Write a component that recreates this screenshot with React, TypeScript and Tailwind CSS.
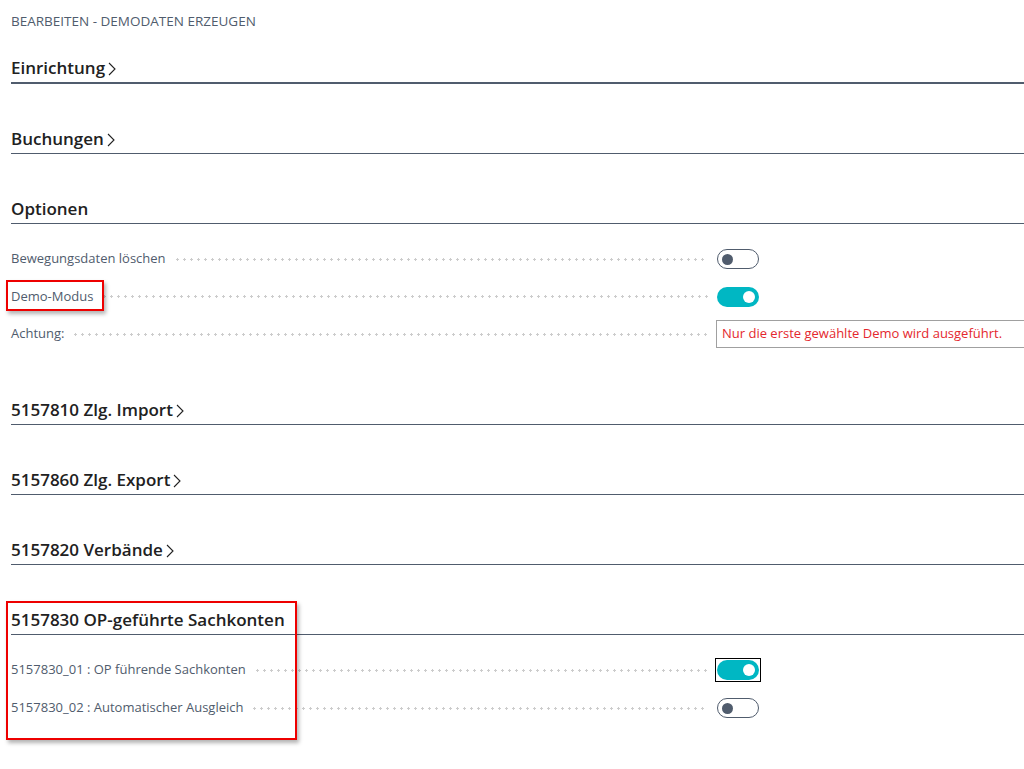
const font = "font-['Segoe_UI','Open_Sans','Noto_Sans',sans-serif]";

function Chevron() {
  return (
    <svg width="10" height="16" viewBox="0 0 10 16" className="ml-[2px] mt-[2px]">
      <polyline points="2,2 8,8 2,14" fill="none" stroke="#212121" strokeWidth="1.1" />
    </svg>
  );
}

function SectionHeader({ title, expandable, thick }: { title: string; expandable?: boolean; thick?: boolean }) {
  return (
    <div className={`flex items-center pb-[2px] ${thick ? "border-b-2" : "border-b"} border-[#505c6d]`}>
      <span className="text-[17px] leading-[24px] font-semibold text-[#212121] whitespace-nowrap">{title}</span>
      {expandable && <Chevron />}
    </div>
  );
}

function Leader() {
  return (
    <div className="flex-1 mx-[8px] h-[3px] bg-[radial-gradient(circle,#cccccc_1px,transparent_1.2px)] bg-[length:7px_3px] bg-repeat-x" />
  );
}

function Toggle({ on, focused }: { on?: boolean; focused?: boolean }) {
  return (
    <div className={`w-[44px] h-[22px] flex items-center justify-center ${focused ? "outline outline-1 outline-black" : ""}`}>
      {on ? (
        <div className="w-[42px] h-[20px] rounded-full bg-[#00b7c3] flex items-center justify-end pr-[4px]">
          <div className="w-[12px] h-[12px] rounded-full bg-white" />
        </div>
      ) : (
        <div className="w-[42px] h-[20px] rounded-full border border-[#505c6d] bg-white flex items-center pl-[4px]">
          <div className="w-[11px] h-[11px] rounded-full bg-[#505c6d]" />
        </div>
      )}
    </div>
  );
}

function Row({ label, children, marked }: { label: string; children: React.ReactNode; marked?: boolean }) {
  return (
    <div className="grid grid-cols-[705px_1fr] h-[28px] items-center">
      <div className="flex items-center">
        <span className="relative text-[13px] text-[#505c6d] whitespace-nowrap">
          {label}
          {marked && (
            <span className="absolute -left-[5px] -right-[11px] -top-[7px] -bottom-[5px] border-2 border-[#ee0000] shadow-[2px_3px_4px_rgba(0,0,0,0.3)]" />
          )}
        </span>
        <Leader />
      </div>
      <div className="flex items-center h-full">{children}</div>
    </div>
  );
}

export default function App() {
  return (
    <div className={`${font} w-[1024px] h-[769px] overflow-hidden bg-white pl-[11px]`}>
      <div className="pt-[13px] text-[13.5px] leading-[16px] text-[#505c6d] uppercase">Bearbeiten - Demodaten erzeugen</div>

      <div className="mt-[27px]">
        <SectionHeader title="Einrichtung" expandable thick />
      </div>
      <div className="mt-[43px]">
        <SectionHeader title="Buchungen" expandable />
      </div>

      <div className="mt-[43px]">
        <SectionHeader title="Optionen" />
        <div className="mt-[21px] flex flex-col gap-[9.5px]">
          <Row label="Bewegungsdaten löschen">
            <Toggle />
          </Row>
          <Row label="Demo-Modus" marked>
            <Toggle on />
          </Row>
          <Row label="Achtung:">
            <div className="w-[340px] h-[28px] border border-[#a0a0a0] flex items-center px-[5px] text-[13px] text-[#e4282e] whitespace-nowrap">
              Nur die erste gewählte Demo wird ausgeführt.
            </div>
          </Row>
        </div>
      </div>

      <div className="mt-[50px]">
        <SectionHeader title="5157810 Zlg. Import" expandable />
      </div>
      <div className="mt-[43px]">
        <SectionHeader title="5157860 Zlg. Export" expandable />
      </div>
      <div className="mt-[43px]">
        <SectionHeader title="5157820 Verbände" expandable />
      </div>

      <div className="mt-[43px] relative">
        <span className="absolute -left-[5px] w-[291px] -top-[7px] h-[139px] border-2 border-[#ee0000] shadow-[2px_3px_4px_rgba(0,0,0,0.3)] pointer-events-none" />
        <SectionHeader title="5157830 OP-geführte Sachkonten" />
        <div className="mt-[21px] flex flex-col gap-[10px]">
          <Row label="5157830_01 : OP führende Sachkonten">
            <Toggle on focused />
          </Row>
          <Row label="5157830_02 : Automatischer Ausgleich">
            <Toggle />
          </Row>
        </div>
      </div>
    </div>
  );
}
